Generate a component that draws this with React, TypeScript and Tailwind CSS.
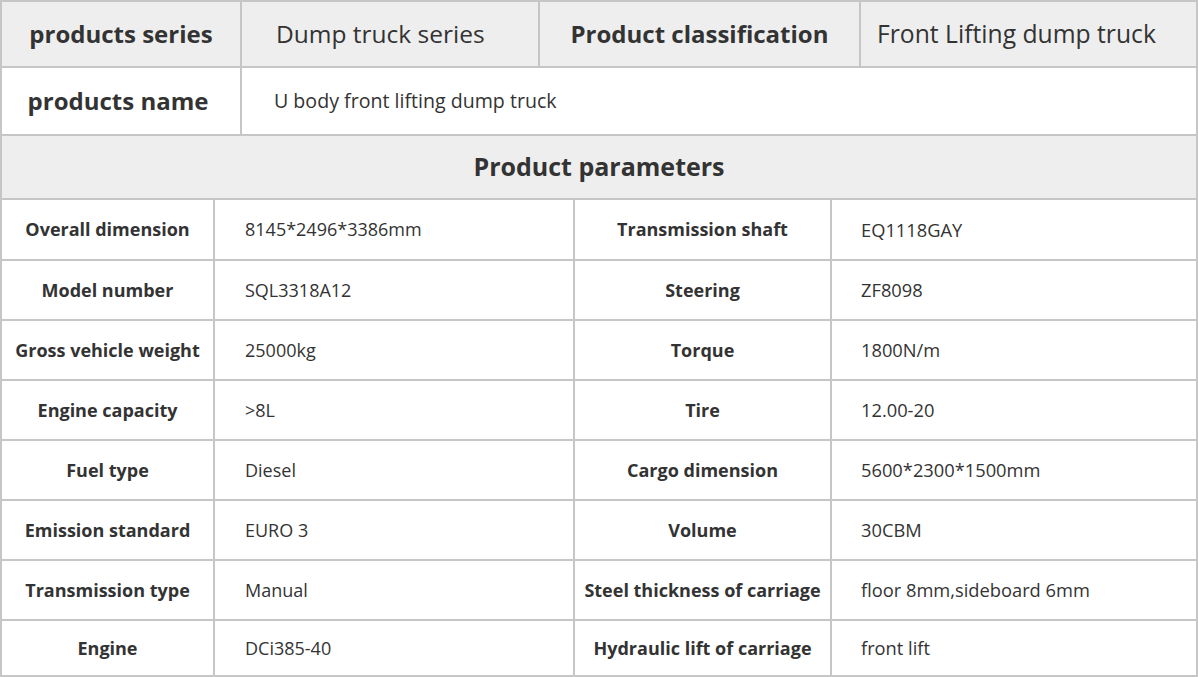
import React from "react";

const specs: [string, string, string, string][] = [
  ["Overall dimension", "8145*2496*3386mm", "Transmission shaft", "EQ1118GAY"],
  ["Model number", "SQL3318A12", "Steering", "ZF8098"],
  ["Gross vehicle weight", "25000kg", "Torque", "1800N/m"],
  ["Engine capacity", ">8L", "Tire", "12.00-20"],
  ["Fuel type", "Diesel", "Cargo dimension", "5600*2300*1500mm"],
  ["Emission standard", "EURO 3", "Volume", "30CBM"],
  ["Transmission type", "Manual", "Steel thickness of carriage", "floor 8mm,sideboard 6mm"],
  ["Engine", "DCi385-40", "Hydraulic lift of carriage", "front lift"],
];

export default function App() {
  return (
    <div
      className="w-[1198px] h-[677px] bg-white text-[#333333] overflow-hidden"
      style={{ fontFamily: '"Open Sans", "Noto Sans", sans-serif' }}
    >
      <div className="flex flex-col gap-[2px] bg-[#c6c6c6] p-[2px]">
        {/* Row 1 */}
        <div className="grid grid-cols-[238px_296px_319px_335px] gap-[2px] h-[64px]">
          <div className="bg-[#eeeeee] flex items-center justify-center text-[24px] font-bold whitespace-nowrap">
            products series
          </div>
          <div className="bg-[#eeeeee] flex items-center pl-[34px] text-[24.5px] whitespace-nowrap">
            Dump truck series
          </div>
          <div className="bg-[#eeeeee] flex items-center justify-center text-[24px] font-bold whitespace-nowrap">
            Product classification
          </div>
          <div className="bg-[#eeeeee] flex items-center pl-[16px] text-[24.7px] whitespace-nowrap">
            Front Lifting dump truck
          </div>
        </div>
        {/* Row 2 */}
        <div className="grid grid-cols-[238px_1fr] gap-[2px] h-[66px]">
          <div className="bg-white flex items-center justify-center pr-[6px] text-[24px] font-bold whitespace-nowrap">
            products name
          </div>
          <div className="bg-white flex items-center pl-[32px] text-[19.6px] whitespace-nowrap">
            U body front lifting dump truck
          </div>
        </div>
        {/* Row 3 */}
        <div className="bg-[#eeeeee] h-[62px] flex items-center justify-center text-[25px] font-bold">
          Product parameters
        </div>
        {/* Specs */}
        {specs.map(([l1, v1, l2, v2], i) => (
          <div
            key={l1}
            className={`grid grid-cols-[211px_358px_255px_364px] gap-[2px] ${
              i === 0 ? "h-[59px]" : i === specs.length - 1 ? "h-[54px]" : "h-[58px]"
            }`}
          >
            <div className="bg-white flex items-center justify-center text-[18px] font-bold whitespace-nowrap">
              {l1}
            </div>
            <div className="bg-white flex items-center pl-[30px] text-[18px] whitespace-nowrap">{v1}</div>
            <div className="bg-white flex items-center justify-center text-[18px] font-bold whitespace-nowrap">
              {l2}
            </div>
            <div className="bg-white flex items-center pl-[29px] text-[18.3px] whitespace-nowrap">{v2}</div>
          </div>
        ))}
      </div>
    </div>
  );
}
